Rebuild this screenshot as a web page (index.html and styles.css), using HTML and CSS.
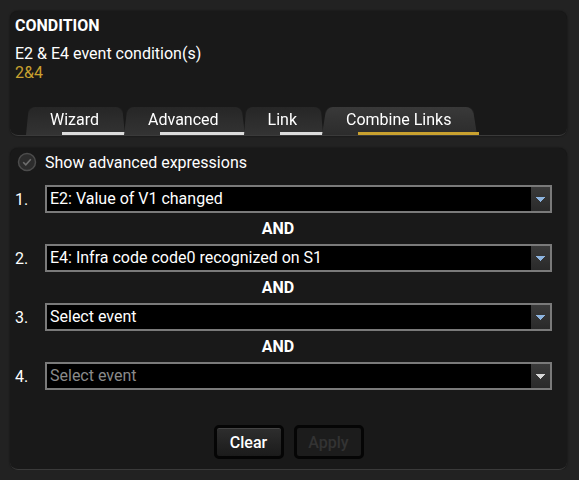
FILE: index.html
```html
<!DOCTYPE html>
<html lang="en">
<head>
    <meta charset="UTF-8">
    <meta name="viewport" content="width=device-width, initial-scale=1.0">
    <title>Condition</title>
    <link rel="stylesheet" href="styles.css">
</head>
<body>
    <div class="page">
        <div class="panel panel-head">
            <div class="title">CONDITION</div>
            <div class="subtitle">E2 &amp; E4 event condition(s)</div>
            <div class="expr">2&amp;4</div>

            <div class="tabs">
                <div class="tab">Wizard</div>
                <div class="tab">Advanced</div>
                <div class="tab">Link</div>
                <div class="tab active">Combine Links</div>
            </div>
        </div>

        <div class="panel panel-body">
            <div class="check-row">
                <svg class="check" width="20" height="20" viewBox="0 0 20 20">
                    <circle cx="10" cy="10" r="8.5" fill="#2c2c2c" stroke="#4c4c4c" stroke-width="1.5"/>
                    <path d="M6.2 10.2 L8.8 12.8 L13.8 7.2" fill="none" stroke="#6e6e6e" stroke-width="1.6"/>
                </svg>
                <span>Show advanced expressions</span>
            </div>

            <div class="event-row">
                <span class="num">1.</span>
                <div class="select">
                    <span class="value">E2: Value of V1 changed</span>
                    <span class="arrow"><svg width="9" height="5" viewBox="0 0 9 5"><path d="M0 0H9V1H8V2H7V3H6V4H5V5H4V4H3V3H2V2H1V1H0Z" fill="#8db4df"/></svg></span>
                </div>
            </div>
            <div class="and">AND</div>
            <div class="event-row">
                <span class="num">2.</span>
                <div class="select">
                    <span class="value">E4: Infra code code0 recognized on S1</span>
                    <span class="arrow"><svg width="9" height="5" viewBox="0 0 9 5"><path d="M0 0H9V1H8V2H7V3H6V4H5V5H4V4H3V3H2V2H1V1H0Z" fill="#8db4df"/></svg></span>
                </div>
            </div>
            <div class="and">AND</div>
            <div class="event-row">
                <span class="num">3.</span>
                <div class="select">
                    <span class="value">Select event</span>
                    <span class="arrow"><svg width="9" height="5" viewBox="0 0 9 5"><path d="M0 0H9V1H8V2H7V3H6V4H5V5H4V4H3V3H2V2H1V1H0Z" fill="#8db4df"/></svg></span>
                </div>
            </div>
            <div class="and">AND</div>
            <div class="event-row">
                <span class="num">4.</span>
                <div class="select disabled">
                    <span class="value">Select event</span>
                    <span class="arrow"><svg width="9" height="5" viewBox="0 0 9 5"><path d="M0 0H9V1H8V2H7V3H6V4H5V5H4V4H3V3H2V2H1V1H0Z" fill="#d6d6d6"/></svg></span>
                </div>
            </div>

            <div class="buttons">
                <button class="btn">Clear</button>
                <button class="btn" disabled>Apply</button>
            </div>
        </div>
    </div>
</body>
</html>
```
FILE: styles.css
```css
body {
    margin: 0;
    background-color: #222222;
    font-family: Roboto, "Liberation Sans", sans-serif;
    color: #ffffff;
}

.page {
    display: flex;
    flex-direction: column;
    gap: 12px;
    padding: 11px 12px 0 10px;
}

.panel {
    background-color: #191919;
    border-radius: 8px;
    border-bottom: 1px solid #3a3a3a;
    box-shadow: 0 0 2px rgba(0, 0, 0, 0.6);
}

.panel-head {
    height: 125px;
    padding: 5px 5px 0;
    box-sizing: border-box;
    display: flex;
    flex-direction: column;
}

.title {
    font-size: 16px;
    font-weight: bold;
    line-height: 19px;
}

.subtitle {
    font-size: 16px;
    line-height: 19px;
    margin-top: 9px;
}

.expr {
    font-size: 16px;
    line-height: 19px;
    color: #c9a12f;
}

.tabs {
    display: flex;
    margin-top: auto;
    padding-left: 11px;
    height: 30px;
}

.tab {
    position: relative;
    z-index: 0;
    height: 30px;
    line-height: 30px;
    padding: 0 26px 0 24px;
    margin-right: -1px;
    font-size: 16px;
}

.tab::before {
    content: '';
    position: absolute;
    inset: 0;
    z-index: -1;
    background: linear-gradient(#262626, #333333);
    border-radius: 7px 7px 0 0;
    transform: perspective(60px) rotateX(7deg);
    transform-origin: bottom;
}

.tab.active::before {
    background: linear-gradient(#393939, #2c2c2c);
}

.tab::after {
    content: '';
    position: absolute;
    left: 36px;
    right: -2px;
    bottom: 0;
    height: 3px;
    background-color: #dcdcdc;
}

.tab.active::after {
    background-color: #c9a12f;
}

.panel-body {
    height: 322px;
    box-sizing: border-box;
    padding: 4px 15px 0 5px;
}

.check-row {
    display: flex;
    align-items: center;
    gap: 8px;
    height: 20px;
    margin-left: 2px;
    font-size: 16px;
}

.event-row {
    display: flex;
    align-items: center;
    margin-top: 13px;
}

.num {
    width: 30px;
    font-size: 16px;
}

.select {
    flex: 1;
    display: flex;
    height: 28px;
    box-sizing: border-box;
    border: 2px solid #7a7a7a;
    background-color: #000000;
}

.value {
    flex: 1;
    font-size: 16px;
    line-height: 24px;
    padding-left: 3px;
}

.select.disabled .value {
    color: #8a8a8a;
}

.arrow {
    width: 19px;
    display: flex;
    align-items: center;
    justify-content: center;
    background: linear-gradient(#3a3a3a, #2a2a2a);
}

.and + .event-row {
    margin-top: 6px;
}

.and {
    text-align: center;
    font-size: 16px;
    font-weight: bold;
    line-height: 19px;
    margin: 6px 11px 0 0;
}

.buttons {
    display: flex;
    justify-content: center;
    gap: 10px;
    margin-top: 35px;
    padding-left: 10px;
}

.btn {
    width: 70px;
    height: 34px;
    background: linear-gradient(#2e2e2e, #1b1b1b);
    border: 3px solid #050505;
    border-radius: 5px;
    color: #ffffff;
    font-family: Roboto, "Liberation Sans", sans-serif;
    font-size: 16px;
    font-weight: 500;
    box-shadow: inset 0 1px 0 #444444;
}

.btn:disabled {
    background: #1c1c1c;
    color: #333333;
    box-shadow: none;
}
```
